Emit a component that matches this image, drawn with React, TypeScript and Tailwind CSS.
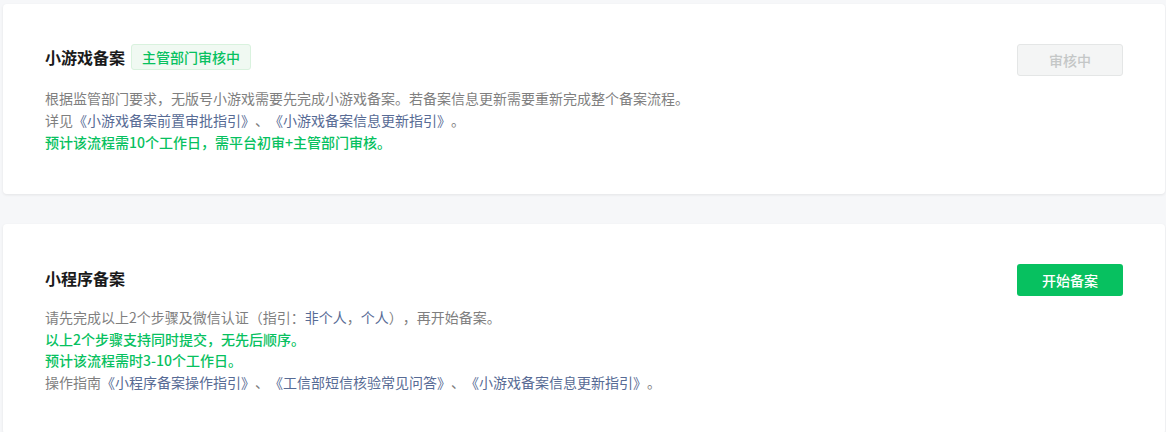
import React from "react";

const font = { fontFamily: '"Noto Sans CJK SC", "Noto Sans", sans-serif' };

function Link({ children }: { children: React.ReactNode }) {
  return <span className="text-[#576b95]">{children}</span>;
}

export default function App() {
  return (
    <div className="min-h-[432px] bg-[#f6f7f9] pt-[4px] pl-[3px] pr-[1px] [text-spacing-trim:space-all]" style={font}>
      <div className="rounded-[4px] bg-white shadow-[0_1px_3px_rgba(0,0,0,0.08)] px-[42px] pt-[40px] pb-[41px]">
        <div className="flex items-start justify-between">
          <div className="flex items-center h-[26px]">
            <span className="text-[16px] font-bold text-[#1a1a1a] leading-[26px]">小游戏备案</span>
            <span className="ml-[6px] h-[26px] px-[10px] rounded-[3px] border border-[#d9f2de] bg-[#f0f9f2] text-[#07c160] text-[14px] leading-[24px] font-medium">
              主管部门审核中
            </span>
          </div>
          <button className="w-[106px] h-[32px] rounded-[3px] border border-[#e4e6e6] bg-[#f4f5f5] text-[#c4c7c7] text-[14px] font-medium leading-[30px]">
            审核中
          </button>
        </div>
        <div className="mt-[11px] text-[14px] leading-[22px] text-[#7f7f7f]">
          <p>根据监管部门要求，无版号小游戏需要先完成小游戏备案。若备案信息更新需要重新完成整个备案流程。</p>
          <p>
            详见<Link>《小游戏备案前置审批指引》</Link>、<Link>《小游戏备案信息更新指引》</Link>。
          </p>
          <p className="text-[#07c160] font-medium">预计该流程需10个工作日，需平台初审+主管部门审核。</p>
        </div>
      </div>
      <div className="mt-[30px] rounded-[4px] bg-white shadow-[0_1px_3px_rgba(0,0,0,0.08)] px-[42px] pt-[40px] pb-[40px]">
        <div className="flex items-start justify-between">
          <div className="flex items-center h-[28px]">
            <span className="text-[16px] font-bold text-[#1a1a1a] leading-[28px]">小程序备案</span>
          </div>
          <button className="w-[106px] h-[32px] rounded-[3px] bg-[#07c160] text-white text-[14px] font-medium leading-[32px]">
            开始备案
          </button>
        </div>
        <div className="mt-[11px] text-[14px] leading-[21.7px] text-[#7f7f7f]">
          <p>
            请先完成以上2个步骤及微信认证（指引：<Link>非个人</Link>，<Link>个人</Link>），再开始备案。
          </p>
          <p className="text-[#07c160] font-medium">以上2个步骤支持同时提交，无先后顺序。</p>
          <p className="text-[#07c160] font-medium">预计该流程需时3-10个工作日。</p>
          <p>
            操作指南<Link>《小程序备案操作指引》</Link>、<Link>《工信部短信核验常见问答》</Link>、<Link>《小游戏备案信息更新指引》</Link>。
          </p>
        </div>
      </div>
    </div>
  );
}
